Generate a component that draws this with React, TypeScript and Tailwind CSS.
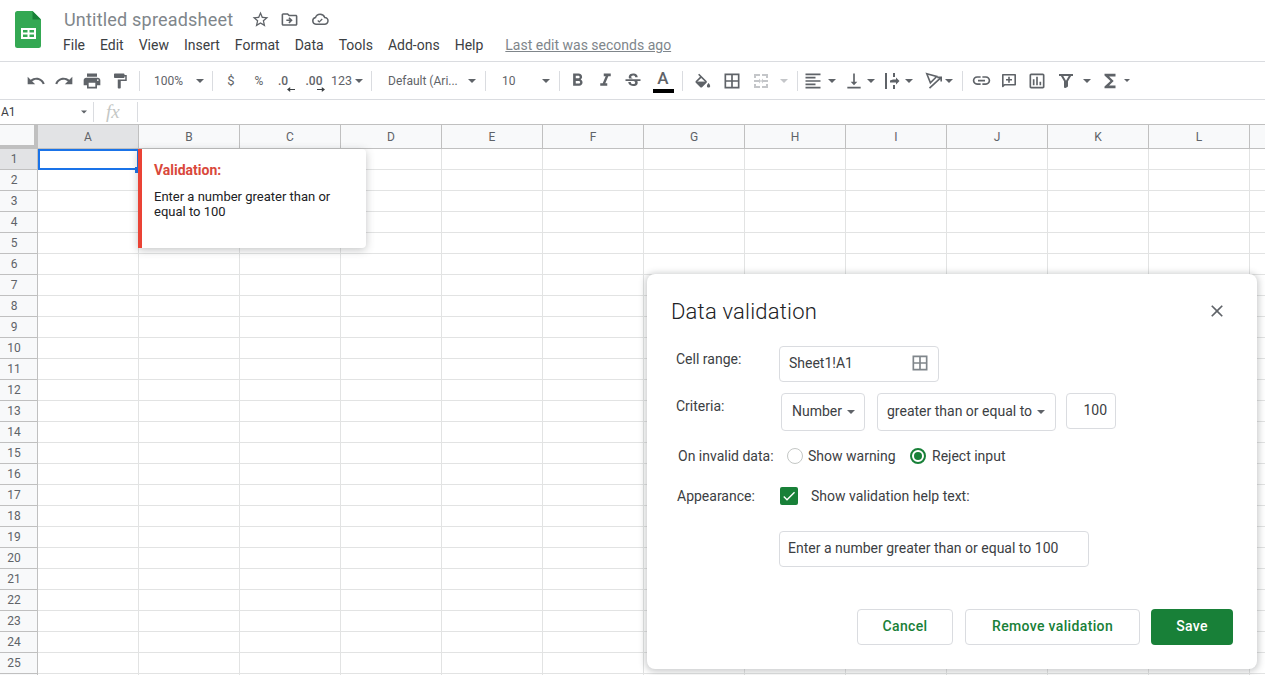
import {
  MdUndo,
  MdRedo,
  MdPrint,
  MdFormatPaint,
  MdFormatBold,
  MdFormatItalic,
  MdStrikethroughS,
  MdBorderAll,
  MdFormatAlignLeft,
  MdVerticalAlignBottom,
  MdLink,
  MdOutlineAssessment,
  MdFunctions,
  MdStarBorder,
  MdOutlineDriveFileMove,
  MdClose,
  MdCheck,
} from "react-icons/md";
import type { ReactNode } from "react";

const menus = ["File", "Edit", "View", "Insert", "Format", "Data", "Tools", "Add-ons", "Help"];
const columns = ["A", "B", "C", "D", "E", "F", "G", "H", "I", "J", "K", "L", ""];
const rows = Array.from({ length: 26 }, (_, i) => i + 1);

function Arrow({ className = "" }: { className?: string }) {
  return <span className={`block h-0 w-0 border-x-[4px] border-t-[4px] border-x-transparent border-t-[#5f6368] ${className}`} />;
}

function Divider({ className = "" }: { className?: string }) {
  return <span className={`block h-5 w-px shrink-0 bg-[#dadce0] ${className}`} />;
}

function Btn({ children, w = "w-7" }: { children: ReactNode; w?: string }) {
  return <span className={`flex h-6 shrink-0 items-center justify-center text-[#5f6368] ${w}`}>{children}</span>;
}

function SheetsLogo() {
  return (
    <svg width="28" height="37" viewBox="0 0 28 37">
      <path d="M17.500 0H2.500A2.500 2.500 0 0 0 0 2.500v32A2.500 2.500 0 0 0 2.500 37h21a2.500 2.500 0 0 0 2.500-2.500V8.500z" fill="#34a853" />
      <path d="M17.500 0v8.500H26z" fill="#188038" />
      <path d="M6 17h15v11H6zm2 2v2.500h4.500V19zm6.500 0v2.500H19V19zM8 23.500V26h4.500v-2.500zm6.500 0V26H19v-2.500z" fill="#fff" fillRule="evenodd" />
    </svg>
  );
}

function CloudCheck() {
  return (
    <svg width="18" height="18" viewBox="0 0 24 24" fill="none" stroke="#5f6368" strokeWidth="2">
      <path d="M6.500 19A4.500 4.500 0 0 1 6 10.100 6.500 6.500 0 0 1 18.300 10 4.500 4.500 0 0 1 18 19z" />
      <path d="M9 14l2 2 4-4" strokeWidth="1.600" />
    </svg>
  );
}

function DecimalIcon({ label, right }: { label: string; right?: boolean }) {
  return (
    <span className={`relative block text-[12px] leading-none font-medium text-[#5f6368] ${right ? "mr-[6px]" : "mr-[8px]"}`}>
      {label}
      <svg className={`absolute top-[12px] ${right ? "left-[11px]" : "left-[9px]"}`} width="8" height="5" viewBox="0 0 10 6" fill="#3c4043">
        {right ? <path d="M0 2.300h6V0l4 3-4 3V3.700H0z" /> : <path d="M10 2.300H4V0L0 3l4 3V3.700h6z" />}
      </svg>
    </span>
  );
}

function FillIcon() {
  return (
    <svg width="18" height="18" viewBox="0 0 22 18" fill="#5f6368">
      <path d="M16.560 8.940L7.620 0 6.210 1.410l2.380 2.380-5.150 5.150c-.59.59-.59 1.540 0 2.120l5.500 5.500c.29.29.68.44 1.060.44s.77-.15 1.060-.44l5.500-5.500c.59-.58.59-1.530 0-2.120zM5.210 10L10 5.210 14.790 10z" />
      <path d="M5.210 10h9.580L10 15zM19 11.500s-2 2.170-2 3.500c0 1.100.9 2 2 2s2-.9 2-2c0-1.330-2-3.500-2-3.500z" />
    </svg>
  );
}

function MergeIcon() {
  return (
    <svg width="18" height="18" viewBox="0 0 18 18" fill="#c4c6c9">
      <path d="M2 2h6v2H4v2H2zm8 0h6v4h-2V4h-4zM2 12h2v2h4v2H2zm12 0h2v4h-6v-2h4zM2 8h5V6.500L9 9l-2 2.500V10H2zm14 0h-5V6.500L9 9l2 2.500V10h5z" />
    </svg>
  );
}

function HAlignIcon() {
  return (
    <svg width="20" height="20" viewBox="0 0 20 20" fill="#5f6368">
      <path d="M3 2h2v16H3zM11 2h2v4h-2zm0 6.500h3V6.500l3.500 3.500-3.500 3.500v-2H8v-2zM11 14h2v4h-2z" />
    </svg>
  );
}

function RotateIcon() {
  return (
    <svg width="18" height="18" viewBox="0 0 20 20" fill="none" stroke="#5f6368" strokeWidth="1.800">
      <path d="M2 2l11 3-7 7z" />
      <path d="M5 18L18 6M13.500 6H18v4.500" />
    </svg>
  );
}

function CommentIcon() {
  return (
    <svg width="18" height="18" viewBox="0 0 18 18" fill="none" stroke="#5f6368" strokeWidth="1.600">
      <path d="M2.800 14.500V2.800h12.400v10H4.500z" strokeLinejoin="round" />
      <path d="M9 4.800v6M6 7.800h6" />
    </svg>
  );
}

function FilterIcon() {
  return (
    <svg width="18" height="18" viewBox="0 0 18 18" fill="none" stroke="#5f6368" strokeWidth="2">
      <path d="M2 3h14M4.500 3L8 9v6l2-1V9l3.500-6" strokeLinejoin="round" />
    </svg>
  );
}

function Toolbar() {
  return (
    <div className="flex h-[39px] items-center border-y border-[#dadce0] pl-[22px] text-[12px] text-[#5f6368]">
      <Btn><MdUndo size={20} /></Btn>
      <Btn><MdRedo size={20} /></Btn>
      <Btn><MdPrint size={20} /></Btn>
      <Btn><MdFormatPaint size={18} /></Btn>
      <Divider className="ml-[5px]" />
      <span className="ml-[14px] w-[42px]">100%</span>
      <Arrow />
      <Divider className="ml-2" />
      <Btn w="ml-[4px] w-[28px]"><span className="text-[13px]">$</span></Btn>
      <Btn><span className="text-[12px]">%</span></Btn>
      <Btn><DecimalIcon label=".0" /></Btn>
      <Btn w="w-8"><DecimalIcon label=".00" right /></Btn>
      <span className="mt-[1px] ml-[-2px] w-[26px] text-[12.500px]">123</span>
      <Arrow className="ml-[-2px]" />
      <Divider className="ml-[8px]" />
      <span className="ml-[16px] w-[80px] truncate">Default (Ari...</span>
      <Arrow />
      <Divider className="ml-[9px]" />
      <span className="ml-[16px] w-[40px]">10</span>
      <Arrow />
      <Divider className="ml-[9px]" />
      <Btn w="ml-[3px] w-7"><MdFormatBold size={21} /></Btn>
      <Btn><MdFormatItalic size={21} /></Btn>
      <Btn><MdStrikethroughS size={20} /></Btn>
      <span className="relative flex h-6 w-8 shrink-0 items-start justify-center">
        <span className="text-[17px] leading-[18px] font-medium">A</span>
        <span className="absolute bottom-0 left-[6px] h-1 w-[21px] bg-black" />
      </span>
      <Divider className="ml-[3px]" />
      <Btn w="ml-[5px] w-7"><FillIcon /></Btn>
      <Btn w="ml-[2px] w-7"><MdBorderAll size={20} /></Btn>
      <Btn w="ml-[1px] w-7"><MergeIcon /></Btn>
      <span className="ml-[5px] block h-0 w-0 border-x-[4px] border-t-[4px] border-x-transparent border-t-[#c4c6c9]" />
      <Divider className="ml-[9px]" />
      <Btn w="ml-[1px] w-7"><MdFormatAlignLeft size={20} /></Btn>
      <Arrow className="ml-[1px]" />
      <Btn w="ml-[4px] w-7"><MdVerticalAlignBottom size={20} /></Btn>
      <Arrow className="ml-[-1px]" />
      <Btn w="ml-[3px] w-7"><HAlignIcon /></Btn>
      <Arrow className="ml-[-1px]" />
      <Btn w="ml-[7px] w-7"><RotateIcon /></Btn>
      <Arrow className="ml-[-3px]" />
      <Divider className="ml-[9px]" />
      <Btn w="ml-[4px] w-7"><MdLink size={21} /></Btn>
      <Btn><CommentIcon /></Btn>
      <Btn><MdOutlineAssessment size={20} /></Btn>
      <Btn w="ml-[1px] w-7"><FilterIcon /></Btn>
      <Arrow className="ml-[3px]" />
      <Btn w="ml-[5px] w-7"><MdFunctions size={22} /></Btn>
      <span className="block h-0 w-0 border-x-[3px] border-t-[3px] border-x-transparent border-t-[#5f6368]" />
    </div>
  );
}

function Sheet() {
  return (
    <div className="text-[12px] text-[#5f6368]">
      <div className="flex h-[25px] border-t border-[#c0c0c0]">
        <div className="h-6 w-[38px] shrink-0 border-r-[4px] border-b-[4px] border-[#c0c0c0] bg-[#f8f9fa]" />
        {columns.map((c, i) => (
          <div
            key={i}
            className={`flex h-6 w-[101px] shrink-0 items-center justify-center border-r border-b border-[#c0c0c0] ${i === 0 ? "bg-[#e2e3e5]" : "bg-[#f8f9fa]"}`}
          >
            {c}
          </div>
        ))}
      </div>
      {rows.map((r) => (
        <div key={r} className="flex h-[21px]">
          <div className={`flex w-[38px] shrink-0 items-center justify-center border-r border-b border-[#c0c0c0] pr-[9px] text-[12px] ${r === 1 ? "bg-[#e2e3e5]" : "bg-[#f8f9fa]"}`}>
            {r < 26 ? r : ""}
          </div>
          {columns.map((c, i) => (
            <div key={i} className="w-[101px] shrink-0 border-r border-b border-[#e2e3e3]" />
          ))}
        </div>
      ))}
    </div>
  );
}

function Field({ children, className = "" }: { children: ReactNode; className?: string }) {
  return (
    <div className={`flex items-center rounded-[4px] border border-[#dadce0] bg-white text-[14px] text-[#3c4043] ${className}`}>
      {children}
    </div>
  );
}

function Dialog() {
  return (
    <div className="absolute top-[274px] left-[647px] h-[395px] w-[610px] rounded-lg bg-white text-[14px] text-[#3c4043] shadow-[0_1px_6px_2px_rgba(60,64,67,0.25)]">
      <div className="flex h-[72px] items-center justify-between pt-[2px] pr-[30px] pl-6">
        <span className="text-[22px] font-light tracking-[0.2px] text-[#202124]">Data validation</span>
        <MdClose size={20} className="text-[#5f6368]" />
      </div>
      <div className="flex h-[36px] items-start">
        <span className="w-[132px] pt-[3px] pl-[29px]">Cell range:</span>
        <Field className="h-[36px] w-[160px] justify-between pr-[8px] pb-[2px] pl-[9px]">
          Sheet1!A1
          <MdBorderAll size={20} className="text-[#80868b]" />
        </Field>
      </div>
      <div className="mt-[11px] flex items-start">
        <span className="w-[134px] pt-[3px] pl-[29px]">Criteria:</span>
        <Field className="h-[38px] w-[84px] justify-between pr-[9px] pb-[1px] pl-[10px]">
          Number
          <Arrow />
        </Field>
        <Field className="ml-3 h-[38px] w-[179px] justify-between pr-[10px] pb-[1px] pl-[9px]">
          greater than or equal to
          <Arrow />
        </Field>
        <Field className="ml-[10px] h-[36px] w-[50px] justify-end pr-[8px] pb-[2px]">100</Field>
      </div>
      <div className="mt-[15px] flex h-[20px] items-center">
        <span className="w-[140px] pl-[31px]">On invalid data:</span>
        <span className="h-4 w-4 rounded-full border border-[#c4c7c5]" />
        <span className="ml-[5px] w-[102px]">Show warning</span>
        <span className="flex h-4 w-4 items-center justify-center rounded-full border-2 border-[#188038]">
          <span className="h-2 w-2 rounded-full bg-[#188038]" />
        </span>
        <span className="ml-[6px]">Reject input</span>
      </div>
      <div className="mt-[20px] flex h-[20px] items-center">
        <span className="w-[133px] pl-[30px]">Appearance:</span>
        <span className="flex h-[18px] w-[18px] items-center justify-center rounded-[2px] bg-[#188038]">
          <MdCheck size={16} className="text-white" />
        </span>
        <span className="ml-[13px]">Show validation help text:</span>
      </div>
      <Field className="mt-[25px] ml-[132px] h-[36px] w-[310px] pb-[1px] pl-[8px]">Enter a number greater than or equal to 100</Field>
      <div className="mt-[42px] flex justify-end pr-6 text-[14px] font-medium tracking-[0.35px]">
        <button className="h-9 w-[96px] rounded-[4px] border border-[#dadce0] pb-[1px] text-[#188038]">Cancel</button>
        <button className="ml-3 h-9 w-[175px] rounded-[4px] border border-[#dadce0] pb-[1px] text-[#188038]">Remove validation</button>
        <button className="ml-[11px] h-9 w-[82px] rounded-[4px] bg-[#188038] pb-[1px] text-white">Save</button>
      </div>
    </div>
  );
}

export default function App() {
  return (
    <div className="relative h-[675px] w-[1265px] overflow-hidden bg-white font-['Roboto',sans-serif]">
      <div className="flex h-[61px]">
        <div className="w-[63px] shrink-0 pt-[11px] pl-[15px]">
          <SheetsLogo />
        </div>
        <div className="pt-[7px]">
          <div className="flex h-[24px] items-center pl-[1px] text-[#80868b]">
            <span className="text-[18px] tracking-[0.2px]">Untitled spreadsheet</span>
            <span className="ml-[18px] text-[#5f6368]"><MdStarBorder size={19} /></span>
            <span className="ml-[10px] text-[#5f6368]"><MdOutlineDriveFileMove size={19} /></span>
            <span className="ml-[12px]"><CloudCheck /></span>
          </div>
          <div className="mt-[3px] flex h-[22px] items-center text-[14px] text-[#3c4043]">
            {menus.map((m, i) => (
              <span key={m} className={i === 0 ? "" : "ml-[15px]"}>{m}</span>
            ))}
            <span className="ml-[22px] text-[#80868b] underline">Last edit was seconds ago</span>
          </div>
        </div>
      </div>
      <Toolbar />
      <div className="flex h-[24px] items-center text-[12px] text-[#3c4043]">
        <span className="w-[80px] pl-[1px]">A1</span>
        <Arrow className="scale-75" />
        <Divider className="ml-[5px]" />
        <span className="w-[43px] pl-[12px] font-['Liberation_Serif',serif] text-[19px] text-[#c4c7c5] italic">fx</span>
        <Divider />
      </div>
      <Sheet />
      {/* selected cell */}
      <div className="absolute top-[149px] left-[38px] h-[21px] w-[101px] border-2 border-[#1a73e8]" />
      <div className="absolute top-[167px] left-[135px] h-[6px] w-[6px] bg-[#1a73e8]" />
      {/* validation tooltip */}
      <div className="absolute top-[149px] left-[138px] h-[99px] w-[228px] rounded-r-[4px] border-l-[4px] border-[#ea4335] bg-white pt-[11px] pl-3 shadow-[0_2px_8px_rgba(60,64,67,0.3)]">
        <div className="text-[14px] font-bold text-[#d9483b]">Validation:</div>
        <div className="mt-[8px] w-[190px] text-[13px] leading-[15px] text-[#202124]">Enter a number greater than or equal to 100</div>
      </div>
      <Dialog />
    </div>
  );
}
